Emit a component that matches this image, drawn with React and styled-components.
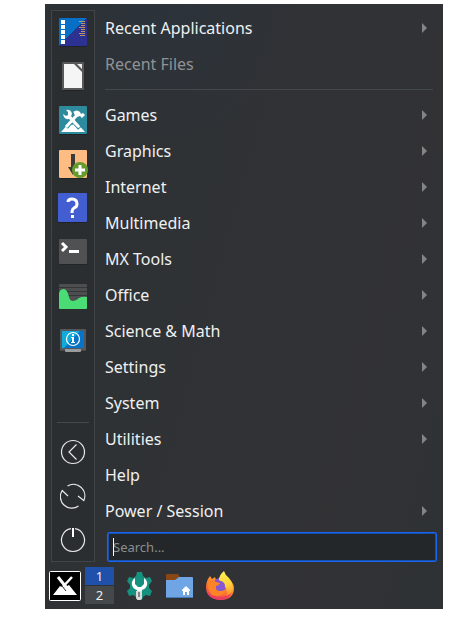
import React from "react";
import styled, { createGlobalStyle } from "styled-components";

const GlobalStyle = createGlobalStyle`
  *, *::before, *::after { box-sizing: border-box; }
  body {
    margin: 0;
    background: #ffffff;
    color: #eff0f1;
    font-family: "Noto Sans", "Open Sans", sans-serif;
    font-size: 16px;
  }
  button, input { font: inherit; color: inherit; }
  button { border: 0; padding: 0; background: none; }
`;

const Page = styled.main`
  padding: 4px 25px 24px 45px;
`;

const Desktop = styled.div`
  background:
    radial-gradient(circle at 30% 0, rgba(42, 52, 66, 0.45), transparent 150px),
    linear-gradient(105deg, #2c3134 0%, #2f3235 35%, #323235 75%, #2e3235 100%);
`;

const Launcher = styled.section`
  display: flex;
  padding: 6px 6px 0;
  gap: 10px;
`;

const Sidebar = styled.nav`
  display: flex;
  flex-direction: column;
  justify-content: space-between;
  flex: none;
  width: 44px;
  background: #2a2e30;
  box-shadow: inset 0 0 0 1px #414548;
`;

const IconGroup = styled.div`
  display: flex;
  flex-direction: column;
`;

const SessionGroup = styled(IconGroup)`
  padding-top: 7px;
  margin: 0 6px;
  border-top: 1px solid #44484b;
`;

const IconButton = styled.button`
  display: flex;
  align-items: center;
  justify-content: center;
  height: 44px;
  svg { display: block; flex: none; }
`;

const Content = styled.div`
  flex: 1;
  min-width: 0;
`;

const MenuList = styled.div`
  display: flex;
  flex-direction: column;
`;

const MenuItem = styled.button`
  display: flex;
  align-items: center;
  justify-content: space-between;
  height: 36px;
  padding-right: 10px;
  text-align: left;
  line-height: 24px;
  color: ${(p) => (p.disabled ? "#909294" : "#eff0f1")};
`;

const Separator = styled.hr`
  width: auto;
  height: 1px;
  margin: 7px 4px 7px 0;
  border: 0;
  background: #45484b;
`;

const SearchField = styled.label`
  position: relative;
  display: block;
  margin: 3px 0 0 2px;
  &::before {
    content: "";
    position: absolute;
    left: 6px;
    top: 6px;
    width: 1px;
    height: 18px;
    background: #ffffff;
  }
`;

const SearchInput = styled.input`
  display: block;
  width: 100%;
  height: 30px;
  padding: 0 5px;
  border: 1px solid #1a65f0;
  border-radius: 2px;
  outline: none;
  background: #232729;
  box-shadow: inset 0 0 0 1px #174fae;
  font-size: 13px;
  &::placeholder { color: #8b8e90; opacity: 1; }
`;

const Taskbar = styled.footer`
  display: flex;
  align-items: center;
  height: 47px;
  padding: 0 4px;
  gap: 12px;
`;

const StartArea = styled.div`
  display: flex;
  align-items: center;
  gap: 4px;
`;

const TaskButton = styled.button`
  display: block;
  svg { display: block; }
`;

const Pager = styled.div`
  display: grid;
  gap: 1px;
  width: 29px;
`;

const PagerButton = styled.button`
  height: 18px;
  background: ${(p) => (p.$active ? "#1f51aa" : "#44484b")};
  font-size: 13px;
  line-height: 18px;
  text-align: center;
`;

const Icon = ({ size = 30, children }) => (
  <svg width={size} height={size} viewBox={`0 0 ${size} ${size}`} aria-hidden="true">
    {children}
  </svg>
);

const RecorderIcon = () => (
  <Icon>
    <rect x="1" y="2" width="28" height="28" rx="1" fill="#202326" />
    <path d="M2 1h27L1 29V2q0-1 1-1z" fill="#0770c6" />
    <path d="M29 1v27q0 1-1 1H1z" fill="#2c3192" />
    <path d="M3 3h4v4H3zM3 8h4v4H3zM3 13h4v4H3zM3 18h4v4H3zM3 23h4v4H3z" fill="#fff" />
    <path d="M21 4.5h6M23 6.5h4M23 8.5h4M21 10.5h6M23 12.5h4M23 14.5h4M21 16.5h6M22 18.5h5" stroke="#dcae5a" strokeWidth=".8" />
  </Icon>
);

const DocumentIcon = () => (
  <Icon>
    <path d="M5 2h20v28H5z" fill="#202326" />
    <path d="M5 1q-1 0-1 1v26q0 1 1 1h20q1 0 1-1V2q0-1-1-1z" fill="#585858" />
    <path d="M6 3h10l8 8v16H6z" fill="#f5f5f5" />
    <path d="M19 3h5v5z" fill="#eee" />
  </Icon>
);

const ToolsIcon = () => (
  <Icon>
    <rect x="1" y="2" width="28" height="28" rx="1" fill="#202326" />
    <rect x="1" y="1" width="28" height="28" rx="1" fill="#2d8b9d" />
    <path d="M3 27l8-9 3 2 4-3 9 10z" fill="#fff" />
    <path d="M8 22L19 10M11 11l11 12" stroke="#2d8b9d" strokeWidth="5" />
    <path d="M8 22L19 10" stroke="#fff" strokeWidth="3" />
    <path d="M15 7q4-3 7 0l1 2 2-1 2 2-3 3-2-2-3 1-3-3q1-1-1-2z" fill="#fff" />
    <path d="M8 5q5-1 6 4l-1 2 9 10q0 2-2 2l-9-9q-5 1-6-5l3 2 2-1 0-3z" fill="#fff" />
  </Icon>
);

const InstallerIcon = () => (
  <Icon size={32}>
    <rect x="2" y="3" width="28" height="28" rx="1" fill="#202326" />
    <rect x="2" y="2" width="28" height="28" rx="1" fill="#fdbc82" />
    <path d="M14 6h4v13h3l-5 8-5-8h3z" fill="#3b3b3b" />
    <circle cx="23" cy="22" r="8" fill="#659b2d" />
    <path d="M23 17v10M18 22h10" stroke="#fff" strokeWidth="3" />
  </Icon>
);

const HelpIcon = () => (
  <Icon>
    <rect x="0" y="1" width="29" height="29" rx="1" fill="#202326" />
    <rect x="0" y="0" width="29" height="29" rx="1" fill="#435ed0" />
    <path d="M10 9q0-3 4-3 5 0 5 5 0 3-3 4-2 1-2 5" fill="none" stroke="#fff" strokeWidth="3" />
    <path d="M13 22h3v3h-3z" fill="#fff" />
  </Icon>
);

const TerminalIcon = () => (
  <Icon>
    <rect x="1" y="3" width="28" height="25" rx="1" fill="#222527" />
    <rect x="1" y="2" width="28" height="25" rx="1" fill="#505152" />
    <path d="M4 6l4 4-4 4" fill="none" stroke="#fff" strokeWidth="3" />
    <path d="M11 14.5h10" stroke="#fff" strokeWidth="3" />
  </Icon>
);

const MonitorIcon = () => (
  <Icon>
    <rect x="1" y="3" width="28" height="25" rx="1" fill="#4c4e4f" />
    <path d="M1 6.5h28M1 10.5h28M1 14.5h28" stroke="#343638" />
    <path d="M1 12q1-4 5-4 3 0 5 8 1 4 4 4 3 0 6-3 3-2 8-1v11q0 1-1 1H2q-1 0-1-1z" fill="#4adc75" />
  </Icon>
);

const InfoIcon = () => (
  <Icon>
    <rect x="2" y="4" width="26" height="22" rx="1" fill="#55585b" />
    <path d="M4 6h22v17H4z" fill="#0774c8" />
    <path d="M4 6h18L6 23H4z" fill="#10aadb" />
    <path d="M2 25h26v1H2z" fill="#4c4543" />
    <path d="M7 24h16v2q0 1-1 1H8q-1 0-1-1z" fill="#999b9d" />
    <circle cx="15" cy="14" r="6.5" fill="none" stroke="#fff" strokeWidth="1.2" />
    <path d="M14 9h2v2h-2zM13 12h3v5h1v1h-4v-1h1v-4h-1z" fill="#fff" />
  </Icon>
);

const LeaveIcon = () => (
  <Icon size={26}>
    <g fill="none" stroke="#e7e8e9" strokeWidth="1.2">
      <circle cx="13" cy="13" r="11.5" />
      <path d="M16.5 5.5L9 13l7.5 7.5" />
    </g>
  </Icon>
);

const RestartIcon = () => (
  <Icon size={26}>
    <g fill="none" stroke="#e7e8e9" strokeWidth="1.2">
      <path d="M7.5 2.9A11.5 11.5 0 0 1 23.8 17.5L18 13" />
      <path d="M18.5 23.1A11.5 11.5 0 0 1 2.2 7.5L8 13" />
    </g>
  </Icon>
);

const PowerIcon = () => (
  <Icon size={26}>
    <path d="M11 1.7A11.5 11.5 0 1 0 15 1.7" fill="none" stroke="#e7e8e9" strokeWidth="1.2" />
    <path d="M13 1v9" stroke="#fff" strokeWidth="2" />
  </Icon>
);

const StartIcon = () => (
  <svg width="32" height="30" viewBox="0 0 32 30" aria-hidden="true">
    <rect x=".5" y=".5" width="31" height="29" rx="1" fill="#000" stroke="#fff" />
    <path d="M4 24l7-9 3 2 6-3 8 10z" fill="#fff" />
    <path d="M9 6l12 15" stroke="#fff" strokeWidth="3" />
    <path d="M23 6L11 19" stroke="#fff" strokeWidth="2.5" />
    <path d="M13 15l4 5" stroke="#000" strokeWidth=".8" />
  </svg>
);

const GearIcon = () => (
  <svg width="28" height="30" viewBox="0 0 28 30" aria-hidden="true">
    <path d="M11 1h5l1 4 3 2 4-1 2 4-3 4v3l3 3-2 5-4-1-3 2-1 3h-5l-1-3-3-2-4 1-2-5 3-3v-3l-3-4 2-4 4 1 3-2z" fill="#16917f" />
    <path d="M9 7q-4 3-3 7 1 4 5 5v8q0 2 2 2t3-2v-8q4-1 5-5 1-4-3-7v6l-3 3h-3l-3-3z" fill="#fff" />
    <path d="M10 20h6v6q0 3-3 3t-3-3z" fill="#dadada" />
    <path d="M13 21v5" stroke="#858585" strokeWidth="2" />
  </svg>
);

const FolderIcon = () => (
  <svg width="28" height="28" viewBox="0 0 28 28" aria-hidden="true">
    <path d="M0 3q0-1 1-1h11l2 3v4H0z" fill="#884714" />
    <path d="M0 8h9l4-3h13q1 0 1 1v19q0 1-1 1H1q-1 0-1-1z" fill="#6fa5e4" />
    <path d="M0 25h27v1H0z" fill="#4778b6" />
    <path d="M20 14l4 4v1h-1v4h-2v-3h-2v3h-2v-4h-1v-1z" fill="#fff" />
  </svg>
);

const FirefoxIcon = () => (
  <svg width="28" height="30" viewBox="0 0 28 30" aria-hidden="true">
    <defs>
      <linearGradient id="fox-body" x1="22" y1="5" x2="10" y2="29" gradientUnits="userSpaceOnUse">
        <stop offset="0" stopColor="#ffb338" />
        <stop offset=".6" stopColor="#ff7828" />
        <stop offset="1" stopColor="#e83e63" />
      </linearGradient>
      <linearGradient id="fox-flame" x1="18" y1="1" x2="22" y2="26" gradientUnits="userSpaceOnUse">
        <stop offset="0" stopColor="#fff052" />
        <stop offset=".5" stopColor="#ffd33a" />
        <stop offset="1" stopColor="#ff8532" />
      </linearGradient>
    </defs>
    <path d="M4 5l2 3 3-2 1 3q7-3 14 0 4 4 4 8 0 12-14 12Q0 28 0 16 0 10 4 5z" fill="url(#fox-body)" />
    <circle cx="14" cy="14" r="7" fill="#8657cf" />
    <path d="M18 0q1 4 5 7 4 5 4 11 0 6-6 8 1-6-2-10-2-5-6-7 0-5 5-9z" fill="url(#fox-flame)" />
    <circle cx="14" cy="15" r="5" fill="#8657cf" />
    <path d="M3 9q4-1 7 2l4 1q0 2-4 3-1 5 4 5 4 0 5-2 0 6-7 7Q3 26 2 15z" fill="#ff8426" />
    <path d="M1 21q5 5 13 5 8 0 12-5-3 8-12 8Q4 28 1 21z" fill="#ed3e61" />
  </svg>
);

const Arrow = () => (
  <svg width="5" height="10" viewBox="0 0 5 10" aria-hidden="true">
    <path d="M0 0l5 5-5 5z" fill="#828486" />
  </svg>
);

const favorites = [
  ["Screen recorder", RecorderIcon],
  ["LibreOffice", DocumentIcon],
  ["MX Tools", ToolsIcon],
  ["Package installer", InstallerIcon],
  ["Help", HelpIcon],
  ["Terminal", TerminalIcon],
  ["System monitor", MonitorIcon],
  ["System information", InfoIcon],
];

const sessionActions = [
  ["Log out", LeaveIcon],
  ["Restart", RestartIcon],
  ["Shut down", PowerIcon],
];

const categories = [
  "Games", "Graphics", "Internet", "Multimedia", "MX Tools", "Office",
  "Science & Math", "Settings", "System", "Utilities", "Help", "Power / Session",
];

export default function App() {
  return (
    <>
      <GlobalStyle />
      <Page>
        <Desktop>
          <Launcher aria-label="Application menu">
            <Sidebar aria-label="Favorites">
              <IconGroup>
                {favorites.map(([label, Glyph]) => (
                  <IconButton key={label} aria-label={label}><Glyph /></IconButton>
                ))}
              </IconGroup>
              <SessionGroup>
                {sessionActions.map(([label, Glyph]) => (
                  <IconButton key={label} aria-label={label}><Glyph /></IconButton>
                ))}
              </SessionGroup>
            </Sidebar>
            <Content>
              <MenuList>
                <MenuItem>Recent Applications<Arrow /></MenuItem>
                <MenuItem disabled>Recent Files</MenuItem>
                <Separator />
                {categories.map((name) => (
                  <MenuItem key={name}>
                    {name}
                    {name !== "Help" && <Arrow />}
                  </MenuItem>
                ))}
              </MenuList>
              <SearchField>
                <SearchInput type="text" aria-label="Search" placeholder="Search..." />
              </SearchField>
            </Content>
          </Launcher>
          <Taskbar>
            <StartArea>
              <TaskButton aria-label="Open application menu"><StartIcon /></TaskButton>
              <Pager>
                <PagerButton $active>1</PagerButton>
                <PagerButton>2</PagerButton>
              </Pager>
            </StartArea>
            <TaskButton aria-label="MX Tools"><GearIcon /></TaskButton>
            <TaskButton aria-label="Home folder"><FolderIcon /></TaskButton>
            <TaskButton aria-label="Firefox"><FirefoxIcon /></TaskButton>
          </Taskbar>
        </Desktop>
      </Page>
    </>
  );
}
